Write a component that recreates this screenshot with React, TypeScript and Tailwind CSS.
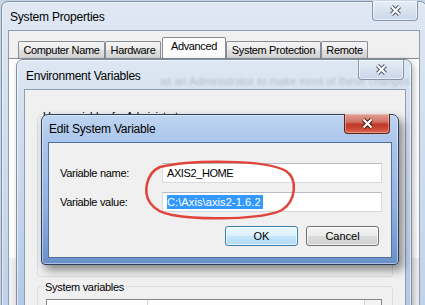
import React from "react";

const FONT = "font-['Liberation_Sans',Arial,sans-serif]";

function CloseGlyph({ active }: { active?: boolean }) {
  const d = "M2.5 1.5 L10.5 9.5 M10.5 1.5 L2.5 9.5";
  return (
    <svg width="13" height="11" viewBox="0 0 13 11">
      <path d={d} stroke={active ? "#4a140d" : "#4b5566"} strokeWidth="4.2" strokeLinecap="butt" fill="none" />
      <path d={d} stroke="#ffffff" strokeWidth="2.2" strokeLinecap="butt" fill="none" />
    </svg>
  );
}

function CloseButton({ active, className }: { active?: boolean; className: string }) {
  return (
    <div
      className={
        "absolute flex h-[20px] w-[46px] items-center justify-center rounded-b-[4px] border border-t-0 " +
        (active
          ? "border-[#5e241c] bg-[linear-gradient(180deg,#e2a196_0%,#d27466_40%,#c0392b_55%,#c94433_75%,#dc6d57_100%)] shadow-[inset_0_0_0_1px_rgba(255,210,200,0.45)] "
          : "border-[#8795aa] bg-[linear-gradient(180deg,#e6edf6_0%,#d8e2ef_50%,#c9d7ea_100%)] shadow-[inset_0_0_0_1px_rgba(255,255,255,0.55)] ") +
        className
      }
    >
      <CloseGlyph active={active} />
    </div>
  );
}

function Tab({ label, w, selected, extra = "" }: { label: string; w: string; selected?: boolean; extra?: string }) {
  return (
    <div
      className={
        "flex items-center justify-center rounded-t-[2px] border border-b-0 border-[#898c95] text-[11px] tracking-[-0.35px] text-black " +
        (selected
          ? "h-[21px] bg-[#fcfcfc] pb-[3px] "
          : "h-[17px] bg-[linear-gradient(180deg,#f4f4f4_0%,#ebebeb_50%,#dedede_51%,#d6d6d6_100%)] ") +
        w +
        " " +
        extra
      }
    >
      {label}
    </div>
  );
}

export default function App() {
  return (
    <div className={"relative h-[305px] w-[425px] overflow-hidden bg-[#c8d5e5] " + FONT}>
      {/* System Properties window */}
      <div className="absolute left-[1px] top-[1px] h-[330px] w-[426px] rounded-t-[7px] border border-[#7f8fa5] bg-[linear-gradient(180deg,#dfe8f3_0%,#d3dfee_35%,#bcd0ea_100%)] pl-[6px] shadow-[inset_0_0_0_1px_rgba(255,255,255,0.55)]">
        <div className="flex h-[28px] items-center pl-[2px] pt-[1px] text-[12px] tracking-[-0.2px] text-black">System Properties</div>
        <div className="h-[300px] w-[412px] border border-[#8d9db2] bg-[#f0f0f0]">
          <div className="ml-[9px] mt-[6px] flex items-end">
            <Tab label="Computer Name" w="w-[87px]" />
            <Tab label="Hardware" w="w-[56px]" />
            <Tab label="Advanced" w="w-[64px]" selected extra="ml-[1px]" />
            <Tab label="System Protection" w="w-[95px]" />
            <Tab label="Remote" w="w-[47px]" />
          </div>
          <div className="h-[200px] border-t border-[#898c95] bg-white" />
        </div>
        <CloseButton className="left-[370px] top-[-1px]" />
      </div>

      {/* Environment Variables window */}
      <div className="absolute left-[16px] top-[59px] h-[300px] w-[396px] rounded-t-[7px] border border-[#7f8fa5] bg-[linear-gradient(180deg,#dde7f3_0%,#cfdcee_30%,#a9c2e4_100%)] pl-[7px] pr-[5px] shadow-[inset_0_0_0_1px_rgba(255,255,255,0.55),2px_2px_6px_rgba(0,0,0,0.25)]">
        <div className="relative h-[29px]">
          <div className="absolute left-[136px] top-[13px] whitespace-nowrap text-[11px] text-[#5a6270] opacity-30 blur-[1.2px]">
            as an Administrator to make most of these changes.
          </div>
          <div className="relative flex h-[29px] items-center pl-[2px] pt-[3px] text-[12px] tracking-[-0.25px] text-black">Environment Variables</div>
        </div>
        <div className="flex h-[265px] flex-col border border-[#8d9db2] bg-[#f0f0f0] px-[12px] pt-[26px]">
          <div className="relative h-[161px] shrink-0 rounded-[3px] border border-[#d5dfe5]">
            <div className="absolute left-[4px] top-[-9px] bg-[#f0f0f0] px-[1px] text-[11px] tracking-[-0.3px] text-black">User variables for Administrator</div>
          </div>
          <div className="relative mt-[9px] h-[60px] shrink-0 rounded-[3px] border border-[#d5dfe5] px-[8px] pt-[12px]">
            <div className="absolute left-[6px] top-[-8px] bg-[#f0f0f0] px-[1px] text-[11px] tracking-[-0.3px] text-black">System variables</div>
            <div className="flex h-[40px] w-[336px] border border-[#828790] bg-white">
              <div className="h-[18px] w-[101px] border-r border-[#d5d5d5] bg-[linear-gradient(180deg,#ffffff,#f3f5f8)]" />
              <div className="h-[18px] flex-1 border-r border-[#d5d5d5] bg-[linear-gradient(180deg,#ffffff,#f3f5f8)]" />
              <div className="h-[18px] w-[16px] bg-[#f3f3f3]" />
            </div>
          </div>
        </div>
        <CloseButton className="left-[341px] top-0" />
      </div>

      {/* Edit System Variable window */}
      <div className="absolute left-[41px] top-[114px] h-[151px] w-[358px] rounded-t-[7px] rounded-b-[4px] border border-[#2c3e5a] bg-[linear-gradient(180deg,#bfd5f1_0%,#a9c5eb_20%,#91b2e1_60%,#6a90cb_100%)] px-[6px] pb-[6px] shadow-[inset_0_0_0_1px_rgba(255,255,255,0.45),4px_5px_10px_rgba(0,0,0,0.45)]">
        <div className="flex h-[27px] items-center pl-[1px] pt-[1px] text-[12px] tracking-[-0.2px] text-black">Edit System Variable</div>
        <div className="h-[116px] border border-[#52709c] bg-[#f0f0f0] pl-[11px] pr-[9px] pt-[20px] text-[11px] text-black">
          <div className="flex items-center">
            <div className="w-[102px] tracking-[-0.3px]">Variable name:</div>
            <div className="flex h-[20px] flex-1 items-center border border-[#d5dae1] border-t-[#b7bcc4] bg-white pl-[4px] tracking-[-0.4px]">AXIS2_HOME</div>
          </div>
          <div className="mt-[9px] flex items-center">
            <div className="w-[102px] tracking-[-0.3px]">Variable value:</div>
            <div className="flex h-[20px] flex-1 items-center border border-[#d5dae1] border-t-[#b7bcc4] bg-white pl-[4px]">
              <span className="bg-[#3399ff] pr-[2px] leading-[14px] tracking-[0.1px] text-white">C:\Axis\axis2-1.6.2</span>
            </div>
          </div>
          <div className="mr-[3px] mt-[14px] flex justify-end gap-[8px]">
            <div className="flex h-[20px] w-[73px] items-center justify-center rounded-[3px] border border-[#3c7fb1] bg-[linear-gradient(180deg,#ecf7fd_0%,#dcf1fc_50%,#c4e6fa_51%,#b0dbf5_100%)] shadow-[inset_0_0_0_1px_rgba(255,255,255,0.7)]">OK</div>
            <div className="flex h-[20px] w-[73px] items-center justify-center rounded-[3px] border border-[#707070] bg-[linear-gradient(180deg,#f4f4f4_0%,#ebebeb_50%,#dddddd_51%,#cfcfcf_100%)] shadow-[inset_0_0_0_1px_rgba(255,255,255,0.7)]">Cancel</div>
          </div>
        </div>
        <CloseButton active className="left-[302px] top-[-1px]" />
      </div>

      {/* Red annotation ellipse */}
      <svg className="pointer-events-none absolute left-0 top-0" width="425" height="305" viewBox="0 0 425 305">
        <path
          d="M160 167 C 190 160, 265 159, 286 171 C 298 179, 296 201, 282 210 C 262 220, 200 220, 172 215 C 150 211, 144 197, 147 184 C 149 175, 153 170, 160 167 Z"
          fill="none"
          stroke="#e0443b"
          strokeWidth="2.5"
        />
      </svg>
    </div>
  );
}
